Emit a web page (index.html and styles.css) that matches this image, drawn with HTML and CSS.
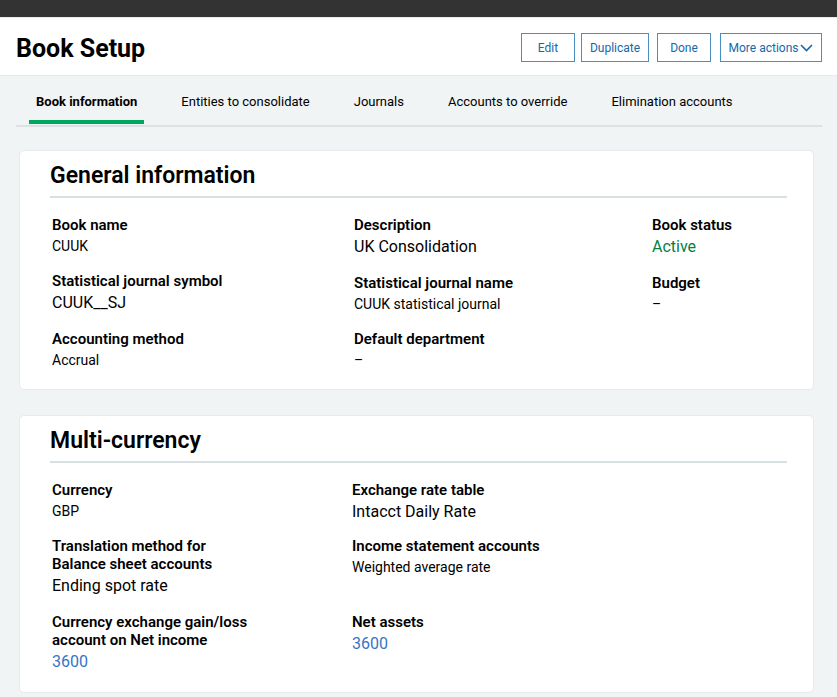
FILE: index.html
```html
<!DOCTYPE html>
<html lang="en">
<head>
    <meta charset="UTF-8">
    <meta name="viewport" content="width=device-width, initial-scale=1.0">
    <title>Book Setup</title>
    <link rel="stylesheet" href="styles.css">
</head>
<body>
  <div class="top-bar"></div>
  <header class="page-header">
    <h1>Book Setup</h1>
    <div class="actions">
      <button type="button" class="btn">Edit</button>
      <button type="button" class="btn btn-wide">Duplicate</button>
      <button type="button" class="btn">Done</button>
      <button type="button" class="btn btn-menu">More actions
        <svg width="13" height="8" viewBox="0 0 13 8"><path d="M1 1 L6.5 6.5 L12 1" fill="none" stroke="currentColor" stroke-width="1.6"/></svg>
      </button>
    </div>
  </header>
  <nav class="tabs">
    <a href="#" class="tab active">Book information</a>
    <a href="#" class="tab">Entities to consolidate</a>
    <a href="#" class="tab">Journals</a>
    <a href="#" class="tab">Accounts to override</a>
    <a href="#" class="tab">Elimination accounts</a>
  </nav>
  <main>
    <section class="card">
      <h2>General information</h2>
      <div class="columns">
        <dl class="column">
          <div><dt>Book name</dt><dd>CUUK</dd></div>
          <div><dt>Statistical journal symbol</dt><dd class="large">CUUK__SJ</dd></div>
          <div><dt>Accounting method</dt><dd>Accrual</dd></div>
        </dl>
        <dl class="column">
          <div><dt>Description</dt><dd class="large">UK Consolidation</dd></div>
          <div><dt>Statistical journal name</dt><dd>CUUK statistical journal</dd></div>
          <div><dt>Default department</dt><dd>–</dd></div>
        </dl>
        <dl class="column">
          <div><dt>Book status</dt><dd class="large status">Active</dd></div>
          <div><dt>Budget</dt><dd>–</dd></div>
        </dl>
      </div>
    </section>
    <section class="card">
      <h2>Multi-currency</h2>
      <dl class="grid">
        <div><dt>Currency</dt><dd>GBP</dd></div>
        <div><dt>Exchange rate table</dt><dd class="large tight">Intacct Daily Rate</dd></div>
        <div><dt>Translation method for<br>Balance sheet accounts</dt><dd class="large">Ending spot rate</dd></div>
        <div><dt>Income statement accounts</dt><dd>Weighted average rate</dd></div>
        <div><dt>Currency exchange gain/loss<br>account on Net income</dt><dd class="large"><a href="#">3600</a></dd></div>
        <div><dt>Net assets</dt><dd class="large"><a href="#">3600</a></dd></div>
      </dl>
    </section>
  </main>
</body>
</html>
```
FILE: styles.css
```css
*{
    margin: 0;
    padding: 0;
    box-sizing: border-box;
}
body{
    background-color: #f0f4f5;
    color: #000;
    font-family: Roboto, "Liberation Sans", sans-serif;
    font-size: 14px;
}
a{
    text-decoration: none;
}
.top-bar{
    height: 17px;
    background-color: #333;
}
.page-header{
    height: 59px;
    padding: 2px 15px 0 16px;
    background-color: #fff;
    border-top: 1px solid #e8eeec;
    border-bottom: 1px solid #e5eaec;
    display: flex;
    align-items: center;
    justify-content: space-between;
}
h1{
    font-size: 25px;
    line-height: 32px;
    font-weight: 700;
    padding-top: 2px;
}
.actions{
    display: flex;
    gap: 6px;
}
.btn{
    width: 54px;
    height: 29px;
    border: 1px solid #4a8fc2;
    background-color: #fff;
    color: #1468ab;
    font-family: inherit;
    font-size: 12px;
    cursor: pointer;
}
.btn-wide{
    width: 68px;
    margin-right: 2px;
}
.btn-menu{
    width: 102px;
    margin-left: 3px;
    display: flex;
    align-items: center;
    justify-content: center;
    gap: 2px;
}
.tabs{
    margin: 0 15px 0 16px;
    padding: 0 13px;
    height: 51px;
    border-bottom: 2px solid #dce1e6;
    display: flex;
    gap: 30px;
}
.tab{
    height: 48px;
    padding: 0 7px;
    color: #000;
    font-size: 13px;
    line-height: 51px;
}
.tab.active{
    font-weight: 700;
    border-bottom: 4px solid #00a65c;
}
main{
    padding: 23px 23px 4px 19px;
    display: flex;
    flex-direction: column;
    gap: 25px;
}
.card{
    padding: 9px 26px 19px 30px;
    background-color: #fff;
    border: 1px solid #e5eaec;
    border-radius: 5px;
}
h2{
    font-size: 23px;
    line-height: 32px;
    font-weight: 600;
    padding-bottom: 4px;
    border-bottom: 2px solid #d9e0e4;
    margin-bottom: 18px;
}
.columns{
    display: grid;
    grid-template-columns: 302fr 298fr 135fr;
    padding-left: 2px;
}
.column{
    display: flex;
    flex-direction: column;
    gap: 16px;
}
.grid{
    display: grid;
    grid-template-columns: 300fr 435fr;
    row-gap: 16px;
    padding-left: 2px;
}
dt{
    font-size: 15px;
    line-height: 18px;
    font-weight: 600;
}
dd{
    padding-top: 2px;
    line-height: 20px;
}
dd.large{
    font-size: 16px;
    line-height: 22px;
}
dd.tight{
    padding-top: 4px;
    line-height: 18px;
}
.status{
    color: #008146;
}
dd a{
    color: #3475c5;
}
```
